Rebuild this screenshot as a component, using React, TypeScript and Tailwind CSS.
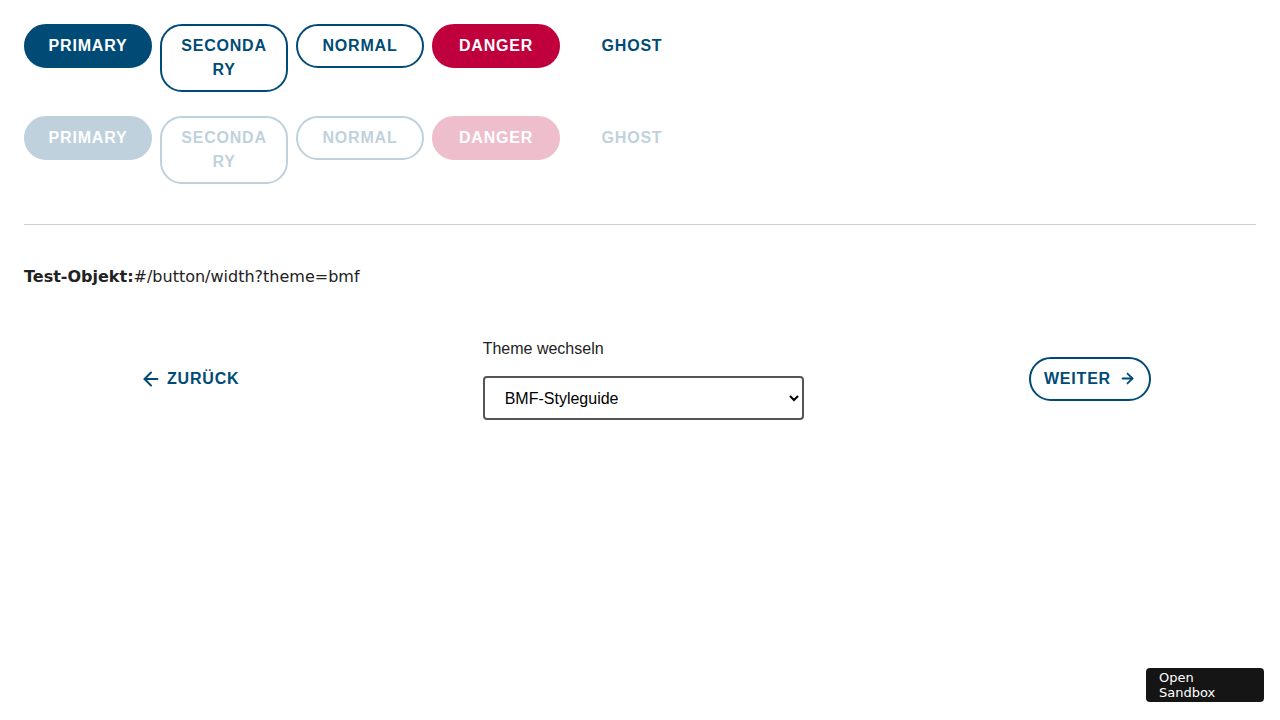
import React from 'react';
import { ArrowLeft, ArrowRight } from 'lucide-react';

const base =
  "w-[128px] px-[14px] py-[8px] border-2 rounded-[22px] font-bold uppercase text-[16px] leading-[24px] tracking-[0.05em] text-center break-all";

const variants: Record<string, string> = {
  primary: "bg-[#004b76] border-[#004b76] text-white",
  secondary: "bg-white border-[#004b76] text-[#004b76]",
  normal: "bg-white border-[#004b76] text-[#004b76]",
  danger: "bg-[#c0003c] border-[#c0003c] text-white",
  ghost: "bg-transparent border-transparent text-[#004b76]",
};

const ButtonRow = ({ disabled }: { disabled?: boolean }) => (
  <div className={`flex items-start gap-2 ${disabled ? "opacity-25" : ""}`}>
    <button className={`${base} ${variants.primary}`}>Primary</button>
    <button className={`${base} ${variants.secondary}`}>Secondary</button>
    <button className={`${base} ${variants.normal}`}>Normal</button>
    <button className={`${base} ${variants.danger}`}>Danger</button>
    <button className={`${base} ${variants.ghost}`}>Ghost</button>
  </div>
);

export default function App() {
  return (
    <div className="min-h-screen bg-white p-6 font-['Liberation_Sans',Arial,sans-serif] text-[#222]">
      <div className="flex flex-col gap-6">
        <ButtonRow />
        <ButtonRow disabled />
      </div>

      <hr className="mt-10 border-t border-[#cfcfcf]" />

      <p className="mt-10 font-['DejaVu_Sans',sans-serif] text-[16px] leading-[24px] text-[#222]">
        <span className="font-bold">Test-Objekt:</span>#/button/width?theme=bmf
      </p>

      <div className="mt-12 flex items-center justify-between pl-[98px] pr-[105px]">
        <button className="flex items-center gap-[5px] px-4 py-[8px] border-2 border-transparent rounded-full font-bold uppercase text-[16px] leading-[24px] tracking-[0.05em] text-[#004b76]">
          <ArrowLeft size={22} strokeWidth={2.2} />
          Zurück
        </button>

        <div className="flex flex-col gap-[15px]">
          <label className="text-[16px] leading-[24px] text-[#222]">Theme wechseln</label>
          <select className="w-[321px] h-[44px] pl-[16px] pr-2 border-2 border-[#555] rounded-[4px] text-[16px] text-black bg-white">
            <option>BMF-Styleguide</option>
          </select>
        </div>

        <button className="flex items-center gap-2 px-[13px] py-[8px] border-2 border-[#004b76] rounded-full font-bold uppercase text-[16px] leading-[24px] tracking-[0.05em] text-[#004b76]">
          Weiter
          <ArrowRight size={17} strokeWidth={2.5} />
        </button>
      </div>

      <div className="fixed right-4 bottom-[18px] w-[118px] h-[34px] rounded-[4px] bg-[#151515] px-[13px] pt-[2px] font-['DejaVu_Sans',sans-serif] text-[13px] leading-[15px] text-white">
        <span className="block">Open</span>
        <span className="block">Sandbox</span>
      </div>
    </div>
  );
}
